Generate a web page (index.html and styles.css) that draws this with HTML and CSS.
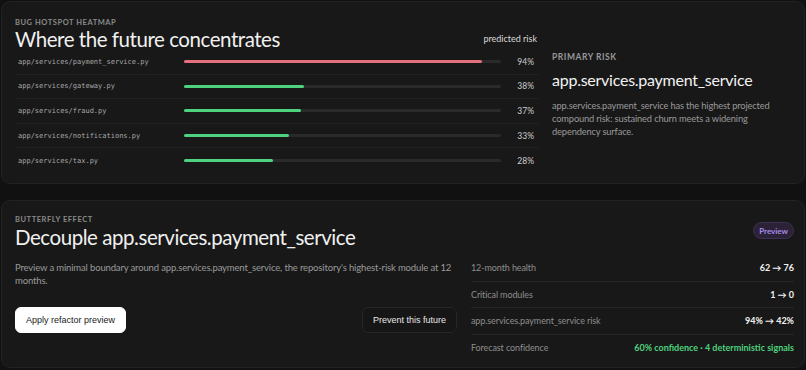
FILE: index.html
```html
<!DOCTYPE html>
<html lang="en">
<head>
  <meta charset="UTF-8">
  <title>Future forecast</title>
  <link rel="stylesheet" href="styles.css">
</head>
<body>
  <section class="card heatmap">
    <div class="heat-main">
      <div class="label">Bug hotspot heatmap</div>
      <div class="heat-head">
        <h1>Where the future concentrates</h1>
        <span class="legend">predicted risk</span>
      </div>
      <div class="rows">
        <div class="row">
          <code>app/services/payment_service.py</code>
          <div class="track"><div class="fill hot" style="width: 94%"></div></div>
          <span class="pct">94%</span>
        </div>
        <div class="row">
          <code>app/services/gateway.py</code>
          <div class="track"><div class="fill" style="width: 38%"></div></div>
          <span class="pct">38%</span>
        </div>
        <div class="row">
          <code>app/services/fraud.py</code>
          <div class="track"><div class="fill" style="width: 37%"></div></div>
          <span class="pct">37%</span>
        </div>
        <div class="row">
          <code>app/services/notifications.py</code>
          <div class="track"><div class="fill" style="width: 33%"></div></div>
          <span class="pct">33%</span>
        </div>
        <div class="row">
          <code>app/services/tax.py</code>
          <div class="track"><div class="fill" style="width: 28%"></div></div>
          <span class="pct">28%</span>
        </div>
      </div>
    </div>
    <aside class="primary">
      <div class="label">Primary risk</div>
      <h2>app.services.payment_service</h2>
      <p>app.services.payment_service has the highest projected compound risk: sustained churn meets a widening dependency surface.</p>
    </aside>
  </section>

  <section class="card butterfly">
    <div class="bf-head">
      <div>
        <div class="label">Butterfly effect</div>
        <h1>Decouple app.services.payment_service</h1>
      </div>
      <span class="badge">Preview</span>
    </div>
    <div class="bf-body">
      <div class="bf-left">
        <p>Preview a minimal boundary around app.services.payment_service, the repository's highest-risk module at 12 months.</p>
        <div class="actions">
          <button class="btn primary-btn">Apply refactor preview</button>
          <button class="btn ghost-btn">Prevent this future</button>
        </div>
      </div>
      <dl class="metrics">
        <div class="metric"><dt>12-month health</dt><dd>62 → 76</dd></div>
        <div class="metric"><dt>Critical modules</dt><dd>1 → 0</dd></div>
        <div class="metric"><dt>app.services.payment_service risk</dt><dd>94% → 42%</dd></div>
        <div class="metric"><dt>Forecast confidence</dt><dd class="good">60% confidence · 4 deterministic signals</dd></div>
      </dl>
    </div>
  </section>
</body>
</html>
```

FILE: styles.css
```css
* { box-sizing: border-box; margin: 0; padding: 0; }

body {
  background: #111111;
  color: #ededed;
  font-family: Lato, "Open Sans", sans-serif;
  padding: 1px;
  display: flex;
  flex-direction: column;
  gap: 16px;
}

.card {
  background: #181818;
  border: 1px solid #222222;
  border-radius: 9px;
}

.label {
  font-size: 7.5px;
  font-weight: 700;
  letter-spacing: 0.55px;
  text-transform: uppercase;
  color: #8a8a8a;
}

h1 {
  font-size: 20.5px;
  font-weight: 400;
  letter-spacing: -0.45px;
  color: #f0f0f0;
}

/* heatmap */
.heatmap {
  display: flex;
  height: 183px;
  padding: 16px 10px 0 13px;
  gap: 14px;
}

.heat-main { width: 523px; }

.heat-head {
  display: flex;
  justify-content: space-between;
  align-items: flex-end;
}
.heat-head h1 { line-height: 24px; }
.legend {
  font-size: 9px;
  color: #d8d8d8;
  padding: 0 1px 7px 0;
}

.rows { margin-top: -1px; }

.row {
  display: flex;
  align-items: center;
  height: 24.6px;
  border-bottom: 1px solid #222222;
}
.row:last-child { border-bottom: none; }

.row code {
  font-family: "DejaVu Sans Mono", monospace;
  font-size: 7px;
  color: #a8a8a8;
  width: 169px;
  padding-left: 3px;
}

.track {
  width: 317px;
  height: 3px;
  background: #2a2a2a;
  border-radius: 2px;
}
.fill {
  height: 100%;
  background: #4fd27e;
  border-radius: 2px;
}
.fill.hot { background: #e5707d; }

.pct {
  flex: 1;
  text-align: right;
  font-size: 8.5px;
  color: #cfcfcf;
  padding-right: 4px;
}

.primary {
  flex: 1;
  padding-top: 34px;
}
.primary .label { font-size: 8.5px; color: #999999; }
.primary h2 {
  font-size: 16px;
  font-weight: 400;
  letter-spacing: -0.25px;
  color: #f2f2f2;
  margin-top: 8px;
}
.primary p {
  font-size: 9.3px;
  line-height: 13px;
  letter-spacing: -0.15px;
  color: #9a9a9a;
  margin-top: 10px;
  padding-right: 20px;
}

/* butterfly */
.butterfly {
  height: 168px;
  padding: 14px 10px 0 13px;
}

.bf-head {
  display: flex;
  justify-content: space-between;
  align-items: flex-end;
}
.bf-head h1 { line-height: 24px; margin-top: 1px; }

.badge {
  font-size: 8px;
  font-weight: 700;
  color: #a98be8;
  background: #2b2238;
  border: 1px solid #3c3150;
  border-radius: 9px;
  padding: 2.5px 5px;
  margin-bottom: 10px;
}

.bf-body {
  display: flex;
  gap: 14px;
  margin-top: 12px;
}

.bf-left { width: 442px; }
.bf-left p {
  font-size: 9.5px;
  line-height: 13px;
  letter-spacing: -0.15px;
  color: #9a9a9a;
}

.actions {
  display: flex;
  justify-content: space-between;
  margin-top: 20px;
}

.btn {
  font-family: "Liberation Sans", Arial, sans-serif;
  font-size: 9px;
  height: 26px;
  padding: 0 10px;
  border-radius: 6px;
  cursor: pointer;
}
.primary-btn {
  background: #ffffff;
  color: #1a1a1a;
  border: 1px solid #ffffff;
}
.ghost-btn {
  background: #161616;
  color: #e8e8e8;
  border: 1px solid #262626;
}

.metrics { flex: 1; margin-top: -6px; }
.metric {
  display: flex;
  justify-content: space-between;
  align-items: center;
  height: 26.5px;
  border-bottom: 1px solid #252525;
  font-size: 9px;
}
.metric:last-child { border-bottom: none; }
.metric dt { color: #8e8e8e; letter-spacing: -0.1px; }
.metric dd { color: #f2f2f2; font-weight: 700; }
.metric dd.good { color: #4fd27e; }
```
